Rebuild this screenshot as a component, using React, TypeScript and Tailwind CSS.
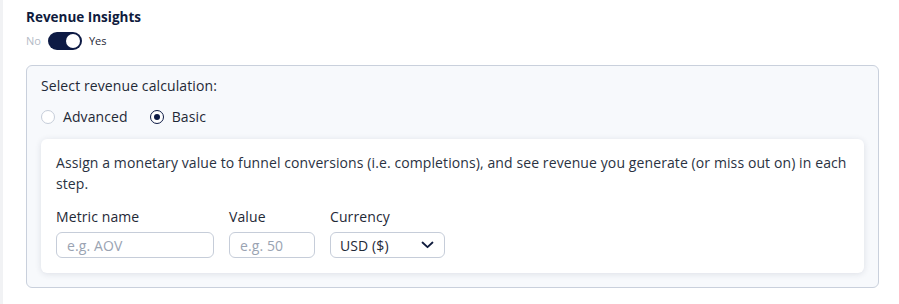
import React, { useState } from 'react';

function Field({ label, placeholder, width }: { label: string; placeholder: string; width: string }) {
  return (
    <div className="flex flex-col">
      <label className="text-[14px] leading-[20px] text-[#1f2937] mb-[5px]">{label}</label>
      <input
        placeholder={placeholder}
        className={`${width} h-[26px] rounded-[6px] border border-[#c6cdd9] bg-white px-[10px] text-[14px] text-[#1f2937] placeholder:text-[#9aa3b2] outline-none`}
      />
    </div>
  );
}

export default function App() {
  const [enabled, setEnabled] = useState(true);
  const [mode, setMode] = useState<'advanced' | 'basic'>('basic');

  return (
    <div
      className="min-h-[304px] w-[899px] bg-white border-l-[3px] border-[#f1f2f4] pl-[23px] pr-[18px] pt-[8px] text-[#1f2937] tracking-[0.1px]"
      style={{ fontFamily: '"Open Sans", sans-serif' }}
    >
      <h2 className="text-[13.5px] font-bold leading-[18px] text-[#0f1b3d] tracking-normal">Revenue Insights</h2>
      <div className="mt-[6px] flex items-center gap-[7px] text-[11px] tracking-normal">
        <span className="text-[#b4bac6]">No</span>
        <button
          onClick={() => setEnabled(!enabled)}
          className={`relative h-[18px] w-[34px] rounded-full ${enabled ? 'bg-[#0d1a44]' : 'bg-gray-300'}`}
        >
          <span
            className={`absolute top-[2px] h-[14px] w-[14px] rounded-full bg-white transition-all ${enabled ? 'left-[18px]' : 'left-[2px]'}`}
          />
        </button>
        <span className="text-[#1f2937]">Yes</span>
      </div>

      <div className="mt-[15px] w-[853px] rounded-[6px] border border-[#c9d0dc] bg-[#f7f9fc] px-[14px] pt-[10px] pb-[14px]">
        <div className="text-[14px] leading-[20px]">Select revenue calculation:</div>
        <div className="mt-[11px] flex items-center gap-[22px] text-[14px] leading-[20px]">
          <label className="flex items-center gap-[8px] cursor-pointer" onClick={() => setMode('advanced')}>
            <span className="flex h-[14px] w-[14px] items-center justify-center rounded-full border border-[#c6cdd9] bg-white">
              {mode === 'advanced' && <span className="h-[6px] w-[6px] rounded-full bg-[#0d1a44]" />}
            </span>
            Advanced
          </label>
          <label className="flex items-center gap-[8px] cursor-pointer" onClick={() => setMode('basic')}>
            <span
              className={`flex h-[14px] w-[14px] items-center justify-center rounded-full border ${mode === 'basic' ? 'border-[#0d1a44]' : 'border-[#c6cdd9]'} bg-white`}
            >
              {mode === 'basic' && <span className="h-[6px] w-[6px] rounded-full bg-[#0d1a44]" />}
            </span>
            Basic
          </label>
        </div>

        <div className="mt-[12px] rounded-[6px] bg-white px-[15px] pt-[13px] pb-[15px] shadow-[0_1px_6px_rgba(30,40,70,0.12)]">
          <p className="text-[14px] leading-[21px] text-[#2a3242]">
            Assign a monetary value to funnel conversions (i.e. completions), and see revenue you generate (or miss out on) in each step.
          </p>
          <div className="mt-[13px] flex gap-[15px]">
            <Field label="Metric name" placeholder="e.g. AOV" width="w-[158px]" />
            <Field label="Value" placeholder="e.g. 50" width="w-[86px]" />
            <div className="flex flex-col">
              <label className="text-[14px] leading-[20px] text-[#1f2937] mb-[5px]">Currency</label>
              <button className="flex h-[26px] w-[115px] items-center justify-between rounded-[6px] border border-[#c6cdd9] bg-white pl-[9px] pr-[10px] text-[14px] text-[#1f2937]">
                <span>USD ($)</span>
                <svg width="13" height="8" viewBox="0 0 13 8" fill="none">
                  <path d="M1.5 1.5 L6.5 6.2 L11.5 1.5" stroke="#0f1b3d" strokeWidth="1.8" strokeLinecap="round" strokeLinejoin="round" />
                </svg>
              </button>
            </div>
          </div>
        </div>
      </div>
    </div>
  );
}
